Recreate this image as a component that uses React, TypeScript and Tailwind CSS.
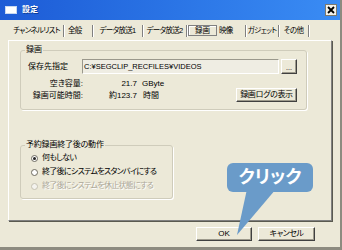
import React from 'react';

const btn =
  'flex items-center justify-center bg-[#ece9d8] border border-t-white border-l-white border-r-[#404040] border-b-[#404040] shadow-[inset_-1px_-1px_0_#9d9a8c]';

const tab =
  'h-[12px] flex items-center whitespace-nowrap text-[7.5px] tracking-[-0.7px] border-r border-[#808080] shadow-[1px_0_0_#fff]';

export default function App() {
  return (
    <div className="relative w-[342px] h-[250px] overflow-hidden bg-[#ece9d8] border-r-2 border-b-[3px] border-[#8d8b80] text-[8px] text-black font-['Liberation_Sans','Noto_Sans_CJK_JP',sans-serif] [font-feature-settings:'palt']">
      {/* title bar */}
      <div className="h-[20px] flex items-center pl-[5px] pr-[3px] bg-linear-to-r from-[#1d5bd6] to-[#3a8cf4]">
        <div className="w-[12px] h-[8px] bg-white border border-[#c8d8f0]" />
        <span className="ml-[5px] text-white font-bold text-[8px] [text-shadow:1px_1px_0_#0b3d9a]">設定</span>
        <div className="ml-auto w-[12px] h-[12px] bg-[#f4f2ea] border border-[#7c7a70] flex items-center justify-center">
          <svg width="8" height="8" viewBox="0 0 8 8">
            <path d="M1 1 L7 7 M7 1 L1 7" stroke="#000" strokeWidth="1.8" />
          </svg>
        </div>
      </div>

      <div className="px-[8px]">
        {/* tabs */}
        <div className="flex items-start pl-[2px] pt-[5px]">
          <div className={`${tab} w-[54px] justify-center`}>チャンネルリスト</div>
          <div className={`${tab} w-[29px] pl-[4px]`}>全般</div>
          <div className={`${tab} w-[50px] justify-center`}>データ放送1</div>
          <div className={`${tab} w-[44px] justify-center`}>データ放送2</div>
          <div className="ml-[1px] w-[29px] h-[11px] flex items-center justify-center text-[7.5px] border border-[#808080] shadow-[inset_1px_1px_0_#fff]">録画</div>
          <div className={`${tab} w-[29px] pl-[2px]`}>映像</div>
          <div className={`${tab} w-[33px] justify-center`}>ガジェット</div>
          <div className={`${tab} w-[30px] justify-center`}>その他</div>
        </div>

        {/* tab panel */}
        <div className="mt-[3px] w-[324px] h-[181px] border border-t-white border-l-white border-r-[#808080] border-b-[#808080] shadow-[1px_1px_0_#5a5a50] pl-[11px] pt-[9px]">
          {/* 録画 group */}
          <div className="relative w-[287px] h-[60px] border border-[#cfccbb] rounded-[3px] shadow-[1px_1px_0_#fff] pt-[8px] pr-[9px]">
            <span className="absolute left-[4px] -top-[6px] px-[1px] leading-[10px] bg-[#ece9d8]">録画</span>
            <div className="flex items-center h-[15px]">
              <span className="w-[61px] pl-[7px]">保存先指定</span>
              <div className="w-[197px] h-[15px] flex items-center pl-[1px] bg-[#efede3] border border-t-[#9a988c] border-l-[#9a988c] border-r-white border-b-white text-[7.5px]">
                C:¥SEGCLIP_RECFILES¥VIDEOS
              </div>
              <div className={`${btn} ml-[2px] w-[16px] h-[15px] items-end pb-[2px] text-[7px] leading-none`}>...</div>
            </div>
            <div className="flex mt-[4px]">
              <div className="grid grid-cols-[62px_54px_auto] leading-[11px]">
                <span className="text-right">空き容量:</span>
                <span className="text-right">21.7</span>
                <span className="pl-[5px]">GByte</span>
                <span className="text-right">録画可能時間:</span>
                <span className="text-right">約123.7</span>
                <span className="pl-[6px]">時間</span>
              </div>
              <div className={`${btn} ml-auto mt-[10px] w-[61px] h-[14px] tracking-[-0.3px]`}>録画ログの表示</div>
            </div>
          </div>

          {/* 予約録画終了後の動作 group */}
          <div className="relative mt-[35px] w-[153px] h-[54px] border border-[#cfccbb] rounded-[3px] shadow-[1px_1px_0_#fff] pt-[5px] pl-[10px] tracking-[-0.7px]">
            <span className="absolute left-[4px] -top-[6px] px-[1px] leading-[10px] bg-[#ece9d8] tracking-[-0.2px]">予約録画終了後の動作</span>
            <div className="flex items-center h-[14px] gap-[4px]">
              <span className="w-[7px] h-[7px] rounded-full bg-white border border-[#6d6b60] flex items-center justify-center">
                <span className="w-[3px] h-[3px] rounded-full bg-[#222]" />
              </span>
              <span>何もしない</span>
            </div>
            <div className="flex items-center h-[14px] gap-[4px]">
              <span className="w-[7px] h-[7px] rounded-full bg-white border border-[#6d6b60]" />
              <span>終了後にシステムをスタンバイにする</span>
            </div>
            <div className="flex items-center h-[14px] gap-[4px] text-[#aca899] [text-shadow:1px_1px_0_#fff]">
              <span className="w-[7px] h-[7px] rounded-full bg-[#f4f3ee] border border-[#c5c2b2]" />
              <span>終了後にシステムを休止状態にする</span>
            </div>
          </div>
        </div>

        {/* dialog buttons */}
        <div className="flex justify-end gap-[6px] pr-[17px] mt-[6px]">
          <div className={`${btn} w-[56px] h-[14px]`}>OK</div>
          <div className={`${btn} w-[57px] h-[14px] tracking-[-0.5px]`}>キャンセル</div>
        </div>
      </div>

      {/* callout */}
      <svg className="absolute left-[230px] top-[189px]" width="50" height="50" viewBox="0 0 50 50">
        <polygon points="17,0 46,0 7,46" fill="#6a9bc9" />
      </svg>
      <div className="absolute left-[227px] top-[163px] w-[86px] h-[29px] rounded-[6px] bg-[#6a9bc9] flex items-center justify-center text-white font-bold text-[18px]">
        クリック
      </div>
    </div>
  );
}
